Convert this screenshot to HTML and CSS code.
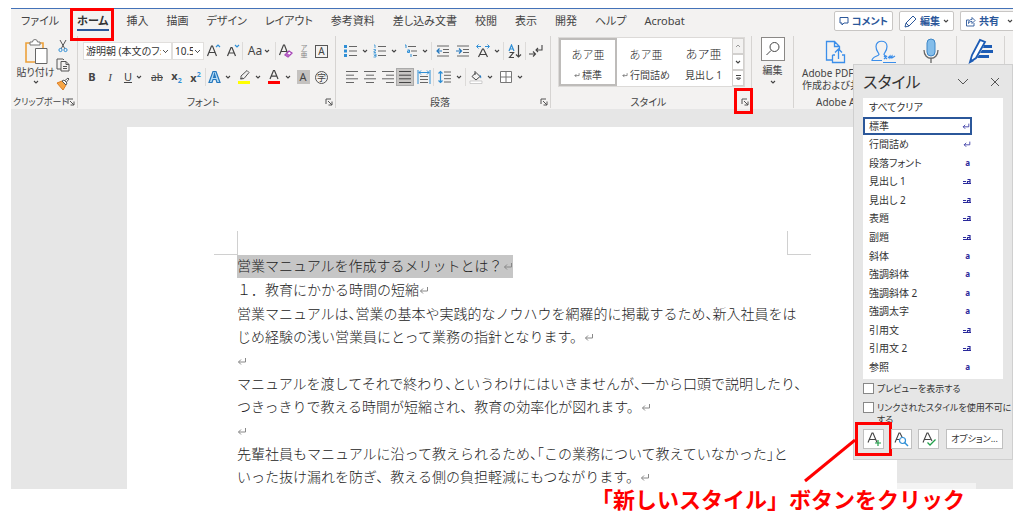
FILE: index.html
```html
<!DOCTYPE html>
<html lang="ja">
<head>
<meta charset="utf-8">
<title>営業マニュアル</title>
<link rel="stylesheet" href="styles.css">
</head>
<body>
<svg class="defs" aria-hidden="true">
  <symbol id="chev" viewBox="0 0 6 6"><path d="M1 2l2 2 2-2" fill="none" stroke="#444" stroke-width="1.1"/></symbol>
  <symbol id="launch" viewBox="0 0 8 8"><path d="M1 6V1h5M3 3l4 4M7 3.5V7H3.5" fill="none" stroke="#555" stroke-width="1"/></symbol>
  <symbol id="ret" viewBox="0 0 10 10"><path d="M8.500 2v4H1.500M4 3.500L1.500 6 4 8.500" fill="none" stroke="currentColor" stroke-width="1"/></symbol>
  <symbol id="link" viewBox="0 0 8 8"><path d="M0 4.500h3M0 6.500h8M4.500 2.500h2.500v4M7 4.500H4.500v2" fill="none" stroke="#2a2a9c" stroke-width="1.200"/></symbol>
</svg>
<div class="app">
  <header class="ribbon">
    <div class="topbar">
      <nav class="tabs">
        <button>ファイル</button><button class="current marked">ホーム</button><button>挿入</button><button>描画</button><button>デザイン</button><button>レイアウト</button><button>参考資料</button><button>差し込み文書</button><button>校閲</button><button>表示</button><button>開発</button><button>ヘルプ</button><button>Acrobat</button>
      </nav>
      <div class="actions">
        <button><svg width="10" height="10" viewBox="0 0 10 10"><path d="M1 1.500h8v5.500H5L3 9V7H1z" fill="none" stroke="#2b579a"/></svg>コメント</button>
        <button><svg width="13" height="13" viewBox="0 0 13 13"><path d="M1 12l1-4 7-7 3 3-7 7zM2 8l3 3" fill="none" stroke="#2b579a"/></svg>編集<svg width="6" height="6"><use href="#chev"/></svg></button>
        <button class="share"><svg width="11" height="11" viewBox="0 0 11 11"><path d="M4 4H1.500v6h7.500V7M3.500 7.500c0-3 1-4 3.500-4V1.500l3 3-3 3V5.500c-2 0-3 .5-3.500 2z" fill="none" stroke="#2b579a" stroke-width=".9"/></svg>共有<svg class="push" width="6" height="6"><use href="#chev"/></svg></button>
      </div>
    </div>
    <div class="groups">
      <section class="group g-clip">
        <div class="clip">
          <button class="paste"><svg width="24" height="26" viewBox="0 0 24 26"><path d="M7 4H2v19h9M15 4h4v5" fill="none" stroke="#eda13a" stroke-width="1.600"/><path d="M6 6V3h2.500a2.500 2.500 0 015 0H16v3z" fill="#fff" stroke="#777"/><path d="M11.500 9.500H23v15H11.500z" fill="#fff" stroke="#666"/></svg><span>貼り付け</span><svg width="6" height="6"><use href="#chev"/></svg></button>
          <div class="clip-side">
            <button aria-label="切り取り"><svg width="10" height="14" viewBox="0 0 10 14"><path d="M2 1l5 9M8 1L3 10" stroke="#555" fill="none"/><circle cx="2.500" cy="11" r="1.600" fill="none" stroke="#2f8fd6"/><circle cx="7.500" cy="11" r="1.600" fill="none" stroke="#2f8fd6"/></svg></button>
            <button aria-label="コピー"><svg width="14" height="14" viewBox="0 0 14 14"><path d="M5 11H1V1h6l1 1M5 3.500h5l3 3V13H5zM10 3.500v3h3M7 8.500h4M7 10.500h4" stroke="#555" fill="none"/></svg></button>
            <button aria-label="書式のコピー"><svg width="14" height="14" viewBox="0 0 14 14"><path d="M1 6l5-2 4 4-3 5z" fill="#f6a545" stroke="#dd7d22"/><path d="M6 4l2-1 3 3-1 2zM9 3.500L12 1l1 1-2.500 3" fill="#fff" stroke="#555"/></svg></button>
          </div>
        </div>
        <footer><span>クリップボード</span><button class="launch" aria-label="クリップボードの詳細"><svg width="8" height="8"><use href="#launch"/></svg></button></footer>
      </section>
      <section class="group g-font">
        <div class="row font-a">
          <select aria-label="フォント"><option>游明朝 (本文のフォント)</option></select>
          <select aria-label="フォント サイズ"><option>10.5</option></select>
          <button aria-label="拡大"><svg width="15" height="16" viewBox="0 0 15 16"><path d="M1.500 13L5.500 3h1l4 10M3 9.500h6" fill="none" stroke="#444" stroke-width="1.200"/><path d="M10 4l2-2 2 2" fill="none" stroke="#2f8fd6" stroke-width="1.200"/></svg></button>
          <button aria-label="縮小"><svg width="14" height="16" viewBox="0 0 14 16"><path d="M1.500 13L5 4.500h1L9.500 13M3 10h5" fill="none" stroke="#444" stroke-width="1.200"/><path d="M9 2l2 2 2-2" fill="none" stroke="#2f8fd6" stroke-width="1.200"/></svg></button>
          <button class="sep big">Aa<svg width="6" height="6"><use href="#chev"/></svg></button>
          <button class="sep" aria-label="書式のクリア"><svg width="15" height="16" viewBox="0 0 15 16"><path d="M1.500 12L5.500 2h1l3 8M3 8.500h6" fill="none" stroke="#444" stroke-width="1.200"/><path d="M7 12l4-4 3 2-4 4z" fill="#fff" stroke="#a33db5" stroke-width="1.300"/><path d="M7 12l2-2 3 2-2 2z" fill="#b964c6"/></svg></button>
          <button class="ruby"><span>ア</span><span>亜</span></button>
          <button><span class="boxed">A</span></button>
        </div>
        <div class="row font-b">
          <button><b>B</b></button><button><i>I</i></button><button class="gap"><u>U</u><svg width="6" height="6"><use href="#chev"/></svg></button><button><s>ab</s></button><button><b>x<sub>2</sub></b></button><button><b>x<sup>2</sup></b></button>
          <button class="sep gap" aria-label="文字の効果"><svg width="13" height="14" viewBox="0 0 13 14"><path d="M1 12.500L5 1.500h3l4 11H9l-1-3H5l-1 3zM5.600 7.500h1.900L6.500 4z" fill="#b7dcf5" stroke="#2477bd" stroke-width="1.200"/></svg><svg width="6" height="6"><use href="#chev"/></svg></button>
          <button class="gap" aria-label="蛍光ペン"><svg width="14" height="16" viewBox="0 0 14 16"><path d="M4 10V7l6-5.500 2 2L7 9.500zM3 10l3-1" fill="#eee" stroke="#555"/><path d="M1 12h12v3H1z" fill="#ff0"/></svg><svg width="6" height="6"><use href="#chev"/></svg></button>
          <button class="gap" aria-label="フォントの色"><svg width="14" height="16" viewBox="0 0 14 16"><path d="M3 10L6.500 1.500h1L11 10M4.500 7.200h5" fill="none" stroke="#444" stroke-width="1.200"/><path d="M1 12h12v3H1z" fill="#f00"/></svg><svg width="6" height="6"><use href="#chev"/></svg></button>
          <button><span class="shaded">A</span></button><button><span class="circled">字</span></button>
        </div>
        <footer><span>フォント</span><button class="launch" aria-label="フォントの詳細"><svg width="8" height="8"><use href="#launch"/></svg></button></footer>
      </section>
      <section class="group g-para">
        <div class="row para-a">
          <button class="gap" aria-label="箇条書き"><svg width="14" height="14" viewBox="0 0 14 14"><path d="M5 2.500h8M5 7h8M5 11.500h8" stroke="#666"/><path d="M0 1h3v3H0zM0 5.500h3v3H0zM0 10h3v3H0z" fill="#2f8fd6"/></svg><svg width="6" height="6"><use href="#chev"/></svg></button>
          <button class="gap" aria-label="段落番号"><svg width="14" height="14" viewBox="0 0 14 14"><path d="M5 2.500h8M5 7h8M5 11.500h8" stroke="#666"/><path d="M1 1h1v3M.5 5.500h2v1.500h-1.500v1.500H3M.5 10H3v3H.5M1 11.500h2" fill="none" stroke="#2f8fd6" stroke-width=".8"/></svg><svg width="6" height="6"><use href="#chev"/></svg></button>
          <button class="gap" aria-label="アウトライン"><svg width="14" height="14" viewBox="0 0 14 14"><path d="M4 2.500h8M7 7h6M9 11.500h4" stroke="#666"/><path d="M1 1h1v3M3.500 6h2v2.500H3.500V7h2M7 10v3" fill="none" stroke="#2f8fd6"/></svg><svg width="6" height="6"><use href="#chev"/></svg></button>
          <button class="sep" aria-label="インデントを減らす"><svg width="13" height="14" viewBox="0 0 13 14"><path d="M1 2h12M7 5.500h6M7 8.500h6M1 12h12" stroke="#666"/><path d="M6 7H1M3.500 4.500L1 7l2.500 2.500" fill="none" stroke="#2477bd" stroke-width="1.200"/></svg></button>
          <button aria-label="インデントを増やす"><svg width="13" height="14" viewBox="0 0 13 14"><path d="M1 2h12M7 5.500h6M7 8.500h6M1 12h12" stroke="#666"/><path d="M0 7h5M3 4.500L5.500 7 3 9.500" fill="none" stroke="#2477bd" stroke-width="1.200"/></svg></button>
          <button class="gap" aria-label="拡張書式"><svg width="14" height="14" viewBox="0 0 14 14"><path d="M2.500 13L6.500 5h1l4 8M4 10.500h6" fill="none" stroke="#444" stroke-width="1.200"/><path d="M5 2.500H1M2.500 .5l-2 2 2 2M9 2.500h4M11.500 .5l2 2-2 2" fill="none" stroke="#2f8fd6"/></svg><svg width="6" height="6"><use href="#chev"/></svg></button>
          <button class="sep" aria-label="並べ替え"><svg width="14" height="15" viewBox="0 0 14 15"><path d="M1 7l2.500-6L6 7M2 5h3" fill="none" stroke="#2f8fd6" stroke-width="1.200"/><path d="M1.500 8.500h4l-4 5h4.500M10.500 1v12M8 10.500l2.500 2.500 2.500-2.500" fill="none" stroke="#444" stroke-width="1.200"/></svg></button>
          <button class="sep" aria-label="編集記号"><svg width="14" height="14" viewBox="0 0 14 14"><path d="M13 1v5H7M9 4L7 6l2 2M0 10h6M4 7.500L6.500 10 4 12.500" fill="none" stroke="#444" stroke-width="1.100"/></svg></button>
        </div>
        <div class="row para-b">
          <button aria-label="左揃え"><svg width="12" height="12" viewBox="0 0 12 12"><path d="M0 .5h12M0 4.200h8M0 7.800h12M0 11.500h8" stroke="#666"/></svg></button>
          <button aria-label="中央揃え"><svg width="12" height="12" viewBox="0 0 12 12"><path d="M0 .5h12M2 4.200h8M0 7.800h12M2 11.500h8" stroke="#666"/></svg></button>
          <button aria-label="右揃え"><svg width="12" height="12" viewBox="0 0 12 12"><path d="M0 .5h12M4 4.200h8M0 7.800h12M4 11.500h8" stroke="#666"/></svg></button>
          <button class="on" aria-label="両端揃え"><svg width="12" height="12" viewBox="0 0 12 12"><path d="M0 .5h12M0 4.200h12M0 7.800h12M0 11.500h12" stroke="#444"/></svg></button>
          <button aria-label="均等割り付け"><svg width="14" height="14" viewBox="0 0 14 14"><path d="M1 0v14M13 0v14M2 2.500h10M4 .5l-2 2 2 2M10 .5l2 2-2 2" fill="none" stroke="#2f8fd6"/><path d="M3 6.500h8M3 9.500h8M3 12.500h8" stroke="#666"/></svg></button>
          <button class="sep gap" aria-label="行間"><svg width="14" height="14" viewBox="0 0 14 14"><path d="M6 2h7M6 5.300h7M6 8.700h7M6 12h7" stroke="#666"/><path d="M2.500 1v12M.5 3.500l2-2 2 2M.5 10.500l2 2 2-2" fill="none" stroke="#2f8fd6" stroke-width="1.200"/></svg><svg width="6" height="6"><use href="#chev"/></svg></button>
          <button class="sep gap" aria-label="塗りつぶし"><svg width="14" height="14" viewBox="0 0 14 14"><path d="M3 6.500l4-4 4 4-4 3.500zM6 1v4" fill="none" stroke="#444"/><path d="M10.500 4.500c2 1 2 3 1.500 4-1-1-1-2-1.500-4z" fill="#2477bd"/><path d="M1 11h12v2.500H1z" fill="#fff" stroke="#bbb" stroke-width=".7"/></svg><svg width="6" height="6"><use href="#chev"/></svg></button>
          <button class="gap" aria-label="罫線"><svg width="14" height="14" viewBox="0 0 14 14"><path d="M1.500 1.500h11v11h-11zM7 1v12M1 7h12" fill="#fff" stroke="#777"/></svg><svg width="6" height="6"><use href="#chev"/></svg></button>
        </div>
        <footer><span>段落</span><button class="launch" aria-label="段落の詳細"><svg width="8" height="8"><use href="#launch"/></svg></button></footer>
      </section>
      <section class="group g-style">
        <div class="gallery">
          <button class="card chosen"><span>あア亜</span><small><svg width="6" height="6"><use href="#ret"/></svg>標準</small></button>
          <button class="card"><span>あア亜</span><small><svg width="6" height="6"><use href="#ret"/></svg>行間詰め</small></button>
          <button class="card light"><span>あア亜</span><small>見出し 1</small></button>
          <div class="scroll">
            <button aria-label="上へ" class="dim"><svg width="6" height="6" viewBox="0 0 6 6"><path d="M1 4l2-2 2 2" fill="none" stroke="#999"/></svg></button>
            <button aria-label="下へ"><svg width="6" height="6"><use href="#chev"/></svg></button>
            <button aria-label="その他"><svg width="7" height="8" viewBox="0 0 7 8"><path d="M1 1.500h5M1.500 4h4L3.500 6z" fill="none" stroke="#444"/></svg></button>
          </div>
        </div>
        <footer><span>スタイル</span><button class="launch marked" aria-label="スタイルの詳細"><svg width="8" height="8"><use href="#launch"/></svg></button></footer>
      </section>
      <section class="group g-edit">
        <button class="tall"><span class="lens"><svg width="16" height="16" viewBox="0 0 16 16"><circle cx="9.500" cy="6" r="4.500" fill="none" stroke="#444"/><path d="M6 9.500L1.500 14" stroke="#444"/></svg></span><span>編集</span><svg width="6" height="6"><use href="#chev"/></svg></button>
      </section>
      <section class="group g-adobe">
        <div class="adobe">
          <button class="pdf"><svg width="22" height="24" viewBox="0 0 22 24"><path d="M8 20H2.500V1.500h8l5 5V11M10.500 1.500v5h5M8.500 15H11M8.500 15v7.500h12V15H18M14.500 19V9.500M11 12.500l3.500-3.500 3.500 3.500" fill="none" stroke="#3b8eea" stroke-width="1.300"/></svg><span>Adobe PDF<br>作成および共</span></button>
          <button class="sign" aria-label="署名を依頼"><svg width="28" height="24" viewBox="0 0 28 24"><path d="M13 20.500H3c0-4 6-4 7-6 0-2-3-3-3-8 0-7 11-7 11 0 0 5-3 6-3 8 .5 1 2 1.500 3 2M14 22.500h13M15 16l3 3M18 16l-3 3M19 18l2-2v2l2-2v2l3-2" fill="none" stroke="#3b8eea" stroke-width="1.200"/></svg></button>
        </div>
        <footer><span>Adobe A</span></footer>
      </section>
      <section class="group g-voice"><button aria-label="ディクテーション"><svg width="18" height="26" viewBox="0 0 18 26"><rect x="5" y="1" width="8" height="17" rx="4" fill="#83bdea" stroke="#3d86c6"/><path d="M2 12c0 11 14 11 14 0M9 20v5" fill="none" stroke="#666" stroke-width="1.300"/></svg></button></section>
      <section class="group g-editor"><button aria-label="エディター"><svg width="26" height="26" viewBox="0 0 26 26"><path d="M2 24l2-7L12 2l5 2-9 16z" fill="#fff" stroke="#1d5cb5" stroke-width="1.800"/><path d="M16 7h8v3h-9zM14 12h11v3H12zM11 17h10v3H9zM2 25l1-4 3 2z" fill="#1d5cb5"/></svg></button></section>
    </div>
  </header>
  <main class="workspace">
    <article class="page">
      <div class="corners"><i></i><i></i></div>
      <h1><span>営業マニュアルを作成するメリットとは？<svg width="10" height="10"><use href="#ret"/></svg></span></h1>
      <p>１．教育にかかる時間の短縮<svg width="10" height="10"><use href="#ret"/></svg></p>
      <p>営業マニュアルは<span class="half">、</span>営業の基本や実践的なノウハウを網羅的に掲載するため<span class="half">、</span>新入社員をは<br>じめ経験の浅い営業員にとって業務の指針となります。<svg width="10" height="10"><use href="#ret"/></svg></p>
      <p class="blank"><svg width="10" height="10"><use href="#ret"/></svg></p>
      <p>マニュアルを渡してそれで終わり<span class="half">、</span>というわけにはいきませんが<span class="half">、</span>一から口頭で説明したり、<br>つきっきりで教える時間が短縮され、教育の効率化が図れます。<svg width="10" height="10"><use href="#ret"/></svg></p>
      <p class="blank"><svg width="10" height="10"><use href="#ret"/></svg></p>
      <p>先輩社員もマニュアルに沿って教えられるため<span class="half">、「</span>この業務について教えていなかった<span class="half">」</span>と<br>いった抜け漏れを防ぎ、教える側の負担軽減にもつながります。<svg width="10" height="10"><use href="#ret"/></svg></p>
    </article>
    <div class="beside"><div class="status"></div></div>
  </main>
  <aside class="pane">
    <header><h2>スタイル</h2><button aria-label="オプション"><svg width="12" height="8" viewBox="0 0 12 8"><path d="M1 1l5 5 5-5" fill="none" stroke="#555"/></svg></button><button aria-label="閉じる"><svg width="10" height="10" viewBox="0 0 10 10"><path d="M1 1l8 8M9 1L1 9" stroke="#555"/></svg></button></header>
    <ul>
      <li><button>すべてクリア</button></li>
      <li class="picked"><button>標準<svg width="8" height="8"><use href="#ret"/></svg></button></li>
      <li><button>行間詰め<svg width="8" height="8"><use href="#ret"/></svg></button></li>
      <li><button>段落フォント<b>a</b></button></li>
      <li><button>見出し 1<svg width="8" height="8"><use href="#link"/></svg></button></li>
      <li><button>見出し 2<svg width="8" height="8"><use href="#link"/></svg></button></li>
      <li><button>表題<svg width="8" height="8"><use href="#link"/></svg></button></li>
      <li><button>副題<svg width="8" height="8"><use href="#link"/></svg></button></li>
      <li><button>斜体<b>a</b></button></li>
      <li><button>強調斜体<b>a</b></button></li>
      <li><button>強調斜体 2<b>a</b></button></li>
      <li><button>強調太字<b>a</b></button></li>
      <li><button>引用文<svg width="8" height="8"><use href="#link"/></svg></button></li>
      <li><button>引用文 2<svg width="8" height="8"><use href="#link"/></svg></button></li>
      <li><button>参照<b>a</b></button></li>
    </ul>
    <label><input type="checkbox"><span>プレビューを表示する</span></label>
    <label><input type="checkbox"><span>リンクされたスタイルを使用不可に<br>する</span></label>
    <div class="tools">
      <button class="new" aria-label="新しいスタイル"><svg width="16" height="16" viewBox="0 0 16 16"><path d="M2 11.500L6 2h1l4 9.500M3.500 8.500h6" fill="none" stroke="#444" stroke-width="1.100"/><path d="M12 9v6M9 12h6" stroke="#21a04a" stroke-width="1.200"/></svg><svg class="pointer" width="54" height="44" viewBox="0 0 54 44"><path d="M2 42L52 1" stroke="#f00" stroke-width="3"/></svg></button>
      <button aria-label="スタイルの検査"><svg width="16" height="16" viewBox="0 0 16 16"><path d="M2 11.500L6 2h1l3 6M3.500 8.500H7" fill="none" stroke="#444" stroke-width="1.100"/><circle cx="9.500" cy="9.500" r="3" fill="#fff" stroke="#2f8fd6" stroke-width="1.200"/><path d="M11.500 11.500l3.500 3.500" stroke="#2f8fd6" stroke-width="1.400"/></svg></button>
      <button aria-label="スタイルの管理"><svg width="16" height="16" viewBox="0 0 16 16"><path d="M2 11.500L6 2h1l4 8M3.500 8.500h6" fill="none" stroke="#444" stroke-width="1.100"/><path d="M6.500 11.500L9 14l5.500-5.500" fill="none" stroke="#21a04a" stroke-width="1.300"/></svg></button>
      <button class="opt">オプション...</button>
    </div>
  </aside>
</div>
<p class="caption">「新しいスタイル」ボタンをクリック</p>
</body>
</html>
```
FILE: styles.css
```css
* { box-sizing: border-box; }
body {
  min-height: 100vh;
  margin: 0;
  padding: 8px 11px 0;
  background: #fff;
  color: #444;
  font: 10px/12px "Noto Sans", "Noto Sans CJK JP", sans-serif;
  font-feature-settings: "palt";
}
.defs { position: absolute; width: 0; height: 0; }
svg { flex: none; display: block; }
button, select {
  margin: 0;
  padding: 0;
  border: 0;
  background: none;
  color: inherit;
  font: inherit;
  font-feature-settings: inherit;
  white-space: nowrap;
}
button { display: flex; align-items: center; justify-content: center; }
.app { position: relative; }

/* Ribbon */
.ribbon { background: #f3f2f1; border-top: 1px solid #4472b8; }
.topbar { display: flex; justify-content: space-between; height: 27px; padding-left: 10px; }
.tabs { display: flex; gap: 18px; font-size: 11px; }
.tabs button { position: relative; height: 24px; }
.tabs .current { font-weight: bold; color: #333; }
.tabs .current::before {
  content: "";
  position: absolute;
  left: 0;
  right: 0;
  bottom: 2px;
  height: 2px;
  background: #2b579a;
}
.marked { position: relative; }
.marked::after { content: ""; position: absolute; border: 3px solid #f00; }
.tabs .marked::after { inset: -1px -5px -8px -7px; }
.actions { display: flex; gap: 6px; padding-top: 2px; overflow: hidden; }
.actions button {
  gap: 3px;
  height: 20px;
  padding: 0 4px;
  border: 1px solid #c8c6c4;
  border-radius: 2px;
  background: #fff;
  color: #2b579a;
  font-size: 10px;
  font-weight: bold;
}
.actions .share { border-right: 0; border-radius: 2px 0 0 2px; padding-right: 0; }
.push { margin-left: 5px; }

.groups { display: flex; height: 73px; overflow: visible; }
.group {
  display: flex;
  flex-direction: column;
  flex: none;
  height: 72px;
  padding-top: 1px;
  border-right: 1px solid #d6d4d2;
}
.group footer {
  display: flex;
  align-items: center;
  justify-content: center;
  position: relative;
  height: 12px;
  margin-top: auto;
  white-space: nowrap;
}
.group footer span { flex: 1; text-align: center; }
.launch { width: 12px; height: 12px; }
.g-clip { width: 67px; }
.g-clip footer { padding-left: 2px; font-size: 9px; }
.g-clip footer span { flex: 1 1 0; min-width: 0; text-align: left; }
.g-font { width: 258px; padding-left: 5px; }
.g-para { width: 215px; padding-left: 6px; }
.g-style { width: 201px; padding-left: 7px; }
.g-edit { width: 42px; }
.g-adobe { width: 111px; }
.g-voice { width: 52px; }
.g-editor { width: 48px; }
.clip { display: flex; }
.paste { flex-direction: column; justify-content: flex-start; width: 43px; padding-left: 6px; gap: 1px; padding-top: 2px; }
.clip-side { display: flex; flex-direction: column; gap: 5px; padding: 2px 0 0 1px; }
.clip-side button { width: 16px; height: 14px; }

.row { display: grid; height: 26px; align-items: center; padding-top: 2px; }
.row button { height: 18px; }
.row .gap { gap: 4px; }
.row .sep { border-left: 1px solid #dddbd9; }
.font-a { grid-template-columns: 89px 32px 19px 19px 33px 20px 18px 17px; }
.font-b { grid-template-columns: 18px 18px 28px 20px 19px 19px 28px 31px 29px 20px 17px; font-size: 11px; }
.para-a { grid-template-columns: 28px 30px 31px 21px 20px 31px 22px 21px; }
.para-b { grid-template-columns: 19px 18px 17px 18px 19px 32px 31px 29px; }
.row select {
  height: 18px;
  padding: 0 10px 0 2px;
  border: 1px solid #e1dfdd;
  border-radius: 0;
  appearance: none;
  color: #333;
  background:
    linear-gradient(45deg, transparent 40%, #555 40% 60%, transparent 60%) right 5px center / 3px 3px no-repeat,
    linear-gradient(-45deg, transparent 40%, #555 40% 60%, transparent 60%) right 3px center / 3px 3px no-repeat,
    #fff;
  overflow: hidden;
}
.big { font-size: 12px; gap: 2px; }
.ruby { flex-direction: column; font-size: 7px; line-height: 7px; color: #888; }
.boxed, .circled { width: 13px; height: 13px; border: 1px solid #555; line-height: 11px; text-align: center; }
.circled { border-radius: 50%; font-size: 9px; }
.shaded { width: 13px; height: 14px; background: #c4c2c0; line-height: 14px; }
.font-b i { font-family: "Liberation Serif", serif; }
.font-b sub, .font-b sup { font-size: 7px; line-height: 7px; color: #2f8fd6; }
.font-b s { font-size: 10px; }
.row .on { background: #c8c6c4; border: 1px solid #aaa; }

.gallery { display: grid; grid-template-columns: 58px 58px 57px 12px; height: 50px; width: 187px; border: 1px solid #dcdad8; background: #fff; }
.card { flex-direction: column; gap: 8px; padding-top: 5px; }
.card span { font-size: 11px; font-weight: 300; font-feature-settings: normal; color: #222; }
.card small { display: flex; align-items: center; gap: 2px; font-size: 10px; }
.card.light span { font-size: 12px; }
.chosen { border: 2px solid #bebcba; }
.scroll { display: grid; grid-template-rows: repeat(3, 1fr); }
.scroll button { border: 1px solid #d2d0ce; }
.scroll .dim { background: #f3f2f1; }
.launch.marked::after { inset: -8px -2px -6px -5px; }
.tall { flex-direction: column; gap: 3px; }
.lens { display: flex; align-items: center; justify-content: center; width: 24px; height: 24px; border: 1px solid #8a8886; background: #fff; }
.tall span { min-width: 20px; }
.adobe { display: flex; padding: 3px 0 0 8px; }
.pdf { flex-direction: column; align-items: flex-start; width: 64px; gap: 3px; }
.pdf svg { margin-left: 22px; }
.pdf span { text-align: left; }
.sign { width: 34px; height: 24px; }
.g-adobe footer { padding-left: 22px; }
.group.g-adobe footer span { text-align: left; }
.g-voice button, .g-editor button { padding-top: 1px; }

/* Document */
.workspace { display: flex; background: #e6e6e6; padding: 18px 0 0 116px; }
.page {
  flex: 0 1 770px;
  min-width: 0;
  padding: 104px 109px 0 110px;
  background: #fff;
  color: #222;
  font: 300 14px/23px "Liberation Serif", "Noto Sans CJK JP", serif;
  font-feature-settings: normal;
  white-space: nowrap;
}
.corners { display: flex; justify-content: space-between; margin: 0 -23px; }
.corners i { width: 24px; height: 24px; border: solid #d0d0d0; border-width: 0 1px 1px 0; }
.corners i:last-child { border-width: 0 0 1px 1px; }
.page h1, .page p { margin: 0 0 1px; font: inherit; }
.page .blank, .page p:last-child { margin: 0; }
.page h1 span { display: inline-block; vertical-align: top; background: #c6c6c6; }
.page svg { display: inline-block; color: #888; }
.half { font-feature-settings: "halt"; }
.beside { flex: 1; display: flex; align-items: flex-end; }
.status { width: 79px; height: 6px; background: #f3f3f3; }

/* Style pane */
.pane {
  position: absolute;
  top: 56px;
  right: 0;
  width: 160px;
  height: 396px;
  padding: 0 9px;
  border: 1px solid #cfcfcf;
  background: #e6e6e6;
  color: #333;
}
.pane header { display: flex; align-items: center; height: 33px; }
.pane h2 { flex: 1; margin: 0; font-size: 16px; font-weight: normal; line-height: 20px; }
.pane header button { width: 16px; height: 16px; margin-left: 16px; }
.pane ul { display: grid; grid-auto-rows: 1fr; height: 281px; margin: 0 0 3px; padding: 0 0 3px; list-style: none; background: #fff; }
.pane li { display: flex; width: 109px; min-height: 0; }
.pane li button { flex: 1; justify-content: space-between; padding: 0 1px 0 6px; }
.pane li svg, .pane li b { color: #2a2a9c; }
.pane li b { padding-right: 1px; font-size: 8px; }
.picked { border: 2px solid #2b579a; }
.pane .picked button { padding: 0 0 0 4px; }
.pane label { display: flex; gap: 3px; height: 19px; padding-top: 1px; font-size: 9px; white-space: nowrap; }
.pane label + label { height: 28px; }
.pane input { appearance: none; flex: none; width: 11px; height: 11px; margin: 0; border: 1px solid #888; background: #fff; }
.tools { display: flex; justify-content: space-between; }
.tools button { position: relative; width: 21px; height: 20px; border: 1px solid #c0c0c0; background: #fff; }
.tools .opt { width: 57px; font-size: 9px; }
.new::after { content: ""; position: absolute; inset: -8px -9px; border: 3px solid #f00; }
.pointer { position: absolute; right: 26px; top: 9px; }

.caption {
  margin: 0;
  padding-right: 48px;
  text-align: right;
  color: #f00;
  font: bold 22px/18px "Noto Sans CJK JP", sans-serif;
  font-feature-settings: normal;
}
```
